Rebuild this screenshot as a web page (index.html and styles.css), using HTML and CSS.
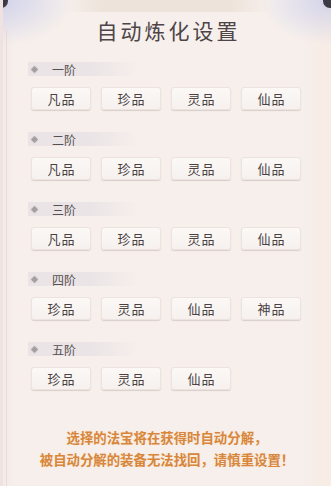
FILE: index.html
```
<html>

<head>
    <link rel="stylesheet" href="styles.css">
</head>

<body>
    <div class="panel">
        <div class="knob knob-left"></div>
        <div class="knob knob-right"></div>
        <div class="top-band"></div>

        <h1 class="title">自动炼化设置</h1>

        <div class="grade">
            <div class="grade-head"><span class="dot"></span>一阶</div>
            <div class="btns">
                <button class="btn">凡品</button>
                <button class="btn">珍品</button>
                <button class="btn">灵品</button>
                <button class="btn">仙品</button>
            </div>
        </div>

        <div class="grade">
            <div class="grade-head"><span class="dot"></span>二阶</div>
            <div class="btns">
                <button class="btn">凡品</button>
                <button class="btn">珍品</button>
                <button class="btn">灵品</button>
                <button class="btn">仙品</button>
            </div>
        </div>

        <div class="grade">
            <div class="grade-head"><span class="dot"></span>三阶</div>
            <div class="btns">
                <button class="btn">凡品</button>
                <button class="btn">珍品</button>
                <button class="btn">灵品</button>
                <button class="btn">仙品</button>
            </div>
        </div>

        <div class="grade">
            <div class="grade-head"><span class="dot"></span>四阶</div>
            <div class="btns">
                <button class="btn">珍品</button>
                <button class="btn">灵品</button>
                <button class="btn">仙品</button>
                <button class="btn">神品</button>
            </div>
        </div>

        <div class="grade">
            <div class="grade-head"><span class="dot"></span>五阶</div>
            <div class="btns">
                <button class="btn">珍品</button>
                <button class="btn">灵品</button>
                <button class="btn">仙品</button>
            </div>
        </div>

        <p class="tip">选择的法宝将在获得时自动分解，<br>被自动分解的装备无法找回，请慎重设置！</p>
    </div>
</body>

</html>
```

FILE: styles.css
```
body {
    margin: 0;
    font-family: "Noto Sans CJK SC", "Noto Sans CJK JP", sans-serif;
    background: #f4ece8;
}

.panel {
    position: relative;
    width: 331px;
    height: 486px;
    overflow: hidden;
    box-sizing: border-box;
    padding-top: 15px;
    background:
        radial-gradient(ellipse 70px 45px at 0 0, rgba(200, 205, 235, 0.8), rgba(220, 215, 240, 0) 100%),
        radial-gradient(ellipse 70px 45px at 100% 0, rgba(200, 205, 235, 0.8), rgba(220, 215, 240, 0) 100%),
        linear-gradient(to right, #f3ebe8 0, #f6efeb 4%, #f6efec 90%, #f8ece4 100%);
    border-left: 3px solid #f0e2e0;
}

.panel::before {
    content: "";
    position: absolute;
    left: 3px;
    top: 30px;
    bottom: 0;
    width: 1px;
    background: #ead9d7;
}

.top-band {
    position: absolute;
    left: 60px;
    right: 60px;
    top: 0;
    height: 12px;
    background: linear-gradient(to right, rgba(236, 226, 214, 0), #ede3da 20%, #ede3da 80%, rgba(236, 226, 214, 0));
}

.knob {
    position: absolute;
    top: -8px;
    width: 14px;
    height: 14px;
    border-radius: 50%;
    background: #3c3a44;
    border: 2px solid #d8d6e4;
}

.knob-left {
    left: -11px;
}

.knob-right {
    right: -8px;
}

.title {
    position: relative;
    margin: 0 0 17px;
    text-align: center;
    font-size: 21px;
    line-height: 30px;
    font-weight: 400;
    letter-spacing: 3px;
    text-indent: 3px;
    color: #4d4448;
}

.grade {
    margin-bottom: 22px;
}

.grade-head {
    display: flex;
    align-items: center;
    height: 14px;
    width: 108px;
    margin-left: 25px;
    padding-left: 3px;
    font-size: 12px;
    color: #57504f;
    background: linear-gradient(to right, #ebe4e6, #ebe4e6 55%, rgba(235, 228, 230, 0));
}

.dot {
    display: inline-block;
    width: 5px;
    height: 5px;
    margin-left: 1px;
    margin-right: 15px;
    background: #a79ea2;
    transform: rotate(45deg);
    box-shadow: 0 0 2px #c9c1c4;
}

.btns {
    display: flex;
    gap: 10px;
    margin-top: 11px;
    padding-left: 28px;
}

.btn {
    width: 60px;
    height: 23px;
    padding: 0;
    border: 1px solid #ece3df;
    border-radius: 3px;
    background: linear-gradient(#fbf8f6, #f6f1ee);
    box-shadow: 0 1px 1px #d9cfcb;
    font-family: "Noto Sans CJK SC", sans-serif;
    font-size: 13px;
    color: #4a4242;
    letter-spacing: 1px;
    text-indent: 1px;
}

.tip {
    margin: 36px 0 0;
    text-align: center;
    font-size: 13.4px;
    line-height: 22px;
    font-weight: bold;
    color: #d7863c;
    text-shadow: 0 0 2px #fbe6cc;
}
```
